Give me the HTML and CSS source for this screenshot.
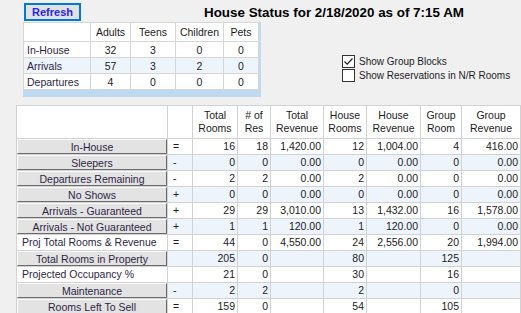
FILE: index.html
```html
<!DOCTYPE html>
<html lang="en">
<head>
<meta charset="UTF-8">
<title>House Status</title>
<link rel="stylesheet" href="styles.css">
</head>
<body>

<div class="form">
  <div class="header-row">
    <button class="refresh">Refresh</button>
    <h1 class="title">House Status for 2/18/2020 as of 7:15 AM</h1>
  </div>

  <div class="summary-row">
    <div class="guest-grid">
      <table>
        <colgroup>
          <col style="width:67px"><col style="width:40px"><col style="width:45px"><col style="width:48px"><col style="width:35px">
        </colgroup>
        <tr class="head">
          <th></th><th>Adults</th><th>Teens</th><th>Children</th><th>Pets</th>
        </tr>
        <tr>
          <td class="name">In-House</td><td>32</td><td>3</td><td>0</td><td>0</td>
        </tr>
        <tr class="alt">
          <td class="name">Arrivals</td><td>57</td><td>3</td><td>2</td><td>0</td>
        </tr>
        <tr>
          <td class="name">Departures</td><td>4</td><td>0</td><td>0</td><td>0</td>
        </tr>
      </table>
    </div>

    <div class="options">
      <label class="check">
        <span class="box">
          <svg width="11" height="11" viewBox="0 0 11 11"><path d="M1.5 5.5 L4.2 8.2 L9.5 2.5" fill="none" stroke="#222" stroke-width="1.2"/></svg>
        </span>
        Show Group Blocks
      </label>
      <label class="check">
        <span class="box"></span>
        Show Reservations in N/R Rooms
      </label>
    </div>
  </div>

  <table class="status-grid">
    <colgroup>
      <col style="width:151px"><col style="width:25px"><col style="width:45px"><col style="width:33px"><col style="width:53px">
      <col style="width:43px"><col style="width:54px"><col style="width:41px"><col style="width:59px">
    </colgroup>
    <tr class="head">
      <th></th><th></th>
      <th>Total<br>Rooms</th><th># of<br>Res</th><th>Total<br>Revenue</th>
      <th>House<br>Rooms</th><th>House<br>Revenue</th><th>Group<br>Room</th><th>Group<br>Revenue</th>
    </tr>
    <tr>
      <td class="btn-cell"><button>In-House</button></td><td class="op">=</td>
      <td>16</td><td>18</td><td>1,420.00</td><td>12</td><td>1,004.00</td><td>4</td><td>416.00</td>
    </tr>
    <tr class="alt">
      <td class="btn-cell"><button>Sleepers</button></td><td class="op">-</td>
      <td>0</td><td>0</td><td>0.00</td><td>0</td><td>0.00</td><td>0</td><td>0.00</td>
    </tr>
    <tr>
      <td class="btn-cell"><button>Departures Remaining</button></td><td class="op">-</td>
      <td>2</td><td>2</td><td>0.00</td><td>2</td><td>0.00</td><td>0</td><td>0.00</td>
    </tr>
    <tr class="alt">
      <td class="btn-cell"><button>No Shows</button></td><td class="op">+</td>
      <td>0</td><td>0</td><td>0.00</td><td>0</td><td>0.00</td><td>0</td><td>0.00</td>
    </tr>
    <tr>
      <td class="btn-cell"><button>Arrivals - Guaranteed</button></td><td class="op">+</td>
      <td>29</td><td>29</td><td>3,010.00</td><td>13</td><td>1,432.00</td><td>16</td><td>1,578.00</td>
    </tr>
    <tr class="alt">
      <td class="btn-cell"><button>Arrivals - Not Guaranteed</button></td><td class="op">+</td>
      <td>1</td><td>1</td><td>120.00</td><td>1</td><td>120.00</td><td>0</td><td>0.00</td>
    </tr>
    <tr>
      <td class="name">Proj Total Rooms &amp; Revenue</td><td class="op">=</td>
      <td>44</td><td>0</td><td>4,550.00</td><td>24</td><td>2,556.00</td><td>20</td><td>1,994.00</td>
    </tr>
    <tr class="alt">
      <td class="btn-cell"><button>Total Rooms in Property</button></td><td class="op"></td>
      <td>205</td><td>0</td><td></td><td>80</td><td></td><td>125</td><td></td>
    </tr>
    <tr>
      <td class="name">Projected Occupancy %</td><td class="op"></td>
      <td>21</td><td>0</td><td></td><td>30</td><td></td><td>16</td><td></td>
    </tr>
    <tr class="alt">
      <td class="btn-cell"><button>Maintenance</button></td><td class="op">-</td>
      <td>2</td><td>2</td><td></td><td>2</td><td></td><td>0</td><td></td>
    </tr>
    <tr>
      <td class="btn-cell"><button>Rooms Left To Sell</button></td><td class="op">=</td>
      <td>159</td><td>0</td><td></td><td>54</td><td></td><td>105</td><td></td>
    </tr>
  </table>
</div>

</body>
</html>
```

FILE: styles.css
```css
  body {
    margin: 0;
    background-color: #f0f0f0;
    font-family: "Liberation Sans", Arial, sans-serif;
    font-size: 10.5px;
    color: #1c1c24;
  }

  .form {
    width: 521px;
    height: 313px;
    overflow: hidden;
  }

  .header-row {
    display: flex;
    height: 22px;
  }
  .refresh {
    margin: 3px 0 0 24px;
    width: 57px;
    height: 18px;
    box-sizing: border-box;
    padding: 0;
    border: 2px solid #0078d7;
    background-color: #e1e1e1;
    color: #2626ee;
    font-family: inherit;
    font-size: 11px;
    font-weight: bold;
  }
  .title {
    margin: 0 0 0 123px;
    padding-top: 5px;
    font-size: 13.4px;
    line-height: 16px;
    font-weight: bold;
    color: #000;
    white-space: nowrap;
  }

  .summary-row {
    display: flex;
    height: 75px;
  }
  .guest-grid {
    margin-left: 23px;
    width: 238px;
    height: 75px;
    background-color: #bfd9f1;
  }
  .guest-grid table {
    border-collapse: collapse;
    table-layout: fixed;
    width: 235px;
    background-color: #fff;
  }
  .guest-grid th,
  .guest-grid td {
    border: 1px solid #d6d6d6;
    padding: 0;
    text-align: center;
    font-weight: normal;
    white-space: nowrap;
  }
  .guest-grid .head th {
    height: 18px;
  }
  .guest-grid td {
    height: 15px;
  }
  .guest-grid .name {
    text-align: left;
    padding-left: 3px;
    color: #2e1f44;
  }
  .guest-grid .alt td {
    background-color: #edf4fc;
  }

  .options {
    margin-left: 81px;
    padding-top: 32px;
  }
  .check {
    display: flex;
    align-items: center;
    height: 14px;
    gap: 4px;
    font-size: 10px;
    white-space: nowrap;
  }
  .check .box {
    width: 13px;
    height: 13px;
    box-sizing: border-box;
    border: 1px solid #333;
    background-color: #fff;
    display: flex;
    align-items: center;
    justify-content: center;
  }

  .status-grid {
    margin: 8px 0 0 16px;
    border-collapse: collapse;
    table-layout: fixed;
    width: 504px;
    background-color: #fff;
  }
  .status-grid th,
  .status-grid td {
    border: 1px solid #d2d2d2;
    padding: 0 2px 0 0;
    text-align: right;
    white-space: nowrap;
    overflow: hidden;
  }
  .status-grid .head th {
    height: 32px;
    text-align: center;
    font-weight: normal;
    line-height: 13px;
    padding: 0;
  }
  .status-grid td {
    height: 15px;
    line-height: 13px;
  }
  .status-grid .alt td {
    background-color: #edf4fc;
  }
  .status-grid .op {
    text-align: left;
    padding-left: 5px;
  }
  .status-grid .name {
    text-align: left;
    padding-left: 5px;
    color: #2e1f44;
  }
  .status-grid .btn-cell {
    padding: 0;
  }
  .btn-cell button {
    display: block;
    width: 100%;
    height: 15px;
    margin: 0;
    padding: 0;
    box-sizing: border-box;
    border: 1px solid;
    border-color: #fcfcfc #6b6b6b #6b6b6b #fcfcfc;
    background-color: #e3e3e3;
    color: #2e1f44;
    font-family: inherit;
    font-size: 10.5px;
    line-height: 12px;
  }
```
